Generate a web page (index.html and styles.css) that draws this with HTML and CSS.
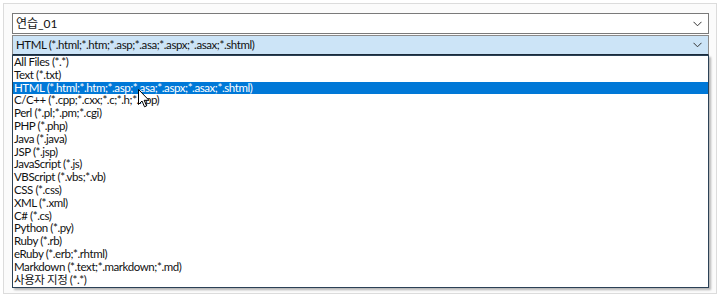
FILE: index.html
```html
<!DOCTYPE html>
<html lang="ko">
<head>
<meta charset="utf-8">
<link rel="stylesheet" href="styles.css">
</head>
<body>
<div class="frame">
  <div class="combo">
    <span class="combo-text">연습_01</span>
    <svg class="chev" width="9" height="6" viewBox="0 0 9 6"><path d="M0.5 0.8 L4.5 4.8 L8.5 0.8" fill="none" stroke="#333" stroke-width="1"/></svg>
  </div>
  <div class="combo open">
    <span class="combo-text">HTML (*.html;*.htm;*.asp;*.asa;*.aspx;*.asax;*.shtml)</span>
    <svg class="chev" width="9" height="6" viewBox="0 0 9 6"><path d="M0.5 0.8 L4.5 4.8 L8.5 0.8" fill="none" stroke="#333" stroke-width="1"/></svg>
  </div>
  <ul class="list">
    <li>All Files (*.*)</li>
    <li>Text (*.txt)</li>
    <li class="sel">HTML (*.html;*.htm;*.asp;*.asa;*.aspx;*.asax;*.shtml)</li>
    <li>C/C++ (*.cpp;*.cxx;*.c;*.h;*.hpp)</li>
    <li>Perl (*.pl;*.pm;*.cgi)</li>
    <li>PHP (*.php)</li>
    <li>Java (*.java)</li>
    <li>JSP (*.jsp)</li>
    <li>JavaScript (*.js)</li>
    <li>VBScript (*.vbs;*.vb)</li>
    <li>CSS (*.css)</li>
    <li>XML (*.xml)</li>
    <li>C# (*.cs)</li>
    <li>Python (*.py)</li>
    <li>Ruby (*.rb)</li>
    <li>eRuby (*.erb;*.rhtml)</li>
    <li>Markdown (*.text;*.markdown;*.md)</li>
    <li>사용자 지정 (*.*)</li>
  </ul>
  <svg class="cursor" width="12" height="19" viewBox="0 0 12 19"><path d="M0.5 0.5 L0.5 15.5 L4 12 L6.5 17.8 L8.6 16.9 L6.2 11.3 L11 11.3 Z" fill="#fff" stroke="#000" stroke-width="1" stroke-linejoin="miter"/></svg>
</div>
</body>
</html>
```

FILE: styles.css
```css
html, body {
  margin: 0;
  padding: 0;
  background: #ffffff;
}
body {
  width: 720px;
  height: 297px;
  overflow: hidden;
  font-family: "Lato", "Noto Sans CJK KR", sans-serif;
  font-size: 11.5px;
  letter-spacing: -0.42px;
  color: #111;
}
.frame {
  position: relative;
  box-sizing: border-box;
  margin: 3px 3px 0 3px;
  width: 714px;
  height: 291px;
  border: 1px solid #dcdcdc;
  background: #fbfbfb;
  padding: 9px 7px 0 8px;
  display: flex;
  flex-direction: column;
}
.combo {
  box-sizing: border-box;
  height: 21px;
  border: 1px solid #7a7a7a;
  background: #fff;
  display: flex;
  align-items: center;
  padding: 0 6px 0 3px;
  line-height: 14px;
}
.combo.open {
  margin-top: 1px;
  height: 20px;
  background: #cce4f7;
  border-color: #8a8a8a #8a8a8a #1b2b3b #8a8a8a;
}
.combo-text {
  flex: 1;
  white-space: nowrap;
}
.combo:first-child .combo-text {
  font-size: 12px;
  letter-spacing: 0;
}
.chev {
  flex: none;
}
.list {
  list-style: none;
  margin: 0;
  padding: 0;
  box-sizing: border-box;
  border: 1px solid #2b4156;
  background: #fff;
  height: 233px;
  width: 697px;
  box-shadow: 2px 2px 2px rgba(0, 0, 0, 0.28);
}
.list li {
  height: 12.8px;
  line-height: 12.8px;
  padding-left: 1px;
  white-space: nowrap;
}
.list li.sel {
  background: #0078d7;
  color: #fff;
}
.cursor {
  position: absolute;
  left: 134px;
  top: 85px;
}
```
